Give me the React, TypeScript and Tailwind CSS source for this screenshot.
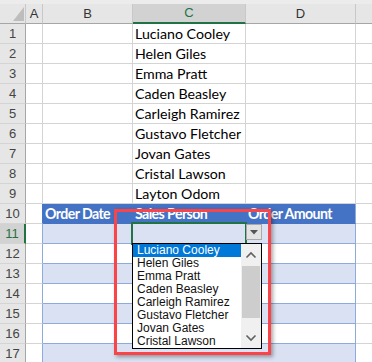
import React from 'react';

const names = [
  'Luciano Cooley',
  'Helen Giles',
  'Emma Pratt',
  'Caden Beasley',
  'Carleigh Ramirez',
  'Gustavo Fletcher',
  'Jovan Gates',
  'Cristal Lawson',
  'Layton Odom',
];

type Kind = 'plain' | 'head' | 'band' | 'white';

const RowHeader: React.FC<{ n: number; selected?: boolean }> = ({ n, selected }) => (
  <div
    className={
      'w-[26px] h-full flex items-center justify-center border-b border-b-[#d4d4d4] text-[13px] font-["Liberation_Sans",sans-serif] ' +
      (selected
        ? 'bg-[#d2d2d2] border-r-2 border-r-[#217346] text-[#217346]'
        : 'bg-[#e6e6e6] border-r border-r-[#a6a6a6] text-[#444]')
    }
  >
    {n}
  </div>
);

const Row: React.FC<{ n: number; b?: string; c?: string; d?: string; kind?: Kind; selected?: boolean }> = ({
  n,
  b = '',
  c = '',
  d = '',
  kind = 'plain',
  selected,
}) => {
  let tableCell = 'border-r border-b border-[#d4d4d4] bg-white';
  let lastCell = 'border-r border-b border-[#d4d4d4] bg-white';
  let aBorder = 'border-r-[#d4d4d4]';
  let text = 'text-black';
  if (kind === 'head') {
    tableCell = 'border-r border-b border-[#4472c4] bg-[#4472c4]';
    lastCell = 'border-r border-b border-b-[#4472c4] border-r-[#8ea9db] bg-[#4472c4]';
    aBorder = 'border-r-[#4472c4]';
    text = 'text-white font-bold tracking-[-0.6px]';
  } else if (kind === 'band') {
    tableCell = 'border-r border-b border-r-[#d9e1f2] border-b-[#8ea9db] bg-[#d9e1f2]';
    lastCell = 'border-r border-b border-[#8ea9db] bg-[#d9e1f2]';
    aBorder = 'border-r-[#8ea9db]';
  } else if (kind === 'white') {
    tableCell = 'border-r border-b border-r-[#d4d4d4] border-b-[#8ea9db] bg-white';
    lastCell = 'border-r border-b border-[#8ea9db] bg-white';
    aBorder = 'border-r-[#8ea9db]';
  }
  return (
    <div className="flex h-[20px] font-['Lato',sans-serif] text-[14.2px] leading-[19px]">
      <RowHeader n={n} selected={selected} />
      <div className={'w-[17px] border-r border-b border-b-[#d4d4d4] ' + aBorder} />
      <div className={'w-[90px] pl-[2px] whitespace-nowrap ' + tableCell + ' ' + text}>{b}</div>
      <div className={'w-[113px] pl-[2px] whitespace-nowrap ' + tableCell + ' ' + text}>{c}</div>
      <div className={'w-[110px] pl-[2px] whitespace-nowrap ' + lastCell + ' ' + text}>{d}</div>
      <div className="flex-1 border-b border-[#d4d4d4]" />
    </div>
  );
};

const ColHeader: React.FC<{ w: string; label: string; selected?: boolean }> = ({ w, label, selected }) => (
  <div
    className={
      w +
      ' flex items-center justify-center text-[13px] font-["Liberation_Sans",sans-serif] border-r border-r-[#c8c8c8] ' +
      (selected
        ? 'bg-[#d2d2d2] border-b-2 border-b-[#217346] text-[#217346]'
        : 'bg-[#e6e6e6] border-b border-b-[#a6a6a6] text-[#333]')
    }
  >
    {label}
  </div>
);

const Chevron: React.FC<{ up?: boolean }> = ({ up }) => (
  <svg width="12" height="8" viewBox="0 0 12 8">
    <path
      d={up ? 'M1.5 6.5 L6 2 L10.5 6.5' : 'M1.5 1.5 L6 6 L10.5 1.5'}
      fill="none"
      stroke="#606060"
      strokeWidth="1.6"
    />
  </svg>
);

export default function App() {
  const body: Kind[] = ['band', 'white', 'band', 'white', 'band', 'white', 'band'];
  return (
    <div className="relative w-[372px] h-[362px] overflow-hidden bg-white">
      {/* column headers */}
      <div className="h-[4px] bg-[#ececec]" />
      <div className="flex h-[20px]">
        <div className="relative w-[26px] bg-[#e6e6e6] border-r border-b border-r-[#c8c8c8] border-b-[#a6a6a6]">
          <svg className="absolute left-[13px] top-[3px]" width="11" height="14" viewBox="0 0 11 14">
            <polygon points="11,0 11,14 0,14" fill="#bdbdbd" />
          </svg>
        </div>
        <ColHeader w="w-[17px]" label="A" />
        <ColHeader w="w-[90px]" label="B" />
        <ColHeader w="w-[113px]" label="C" selected />
        <ColHeader w="w-[110px]" label="D" />
        <div className="flex-1 bg-[#e6e6e6] border-b border-b-[#a6a6a6]" />
      </div>

      {names.map((name, i) => (
        <Row key={name} n={i + 1} c={name} />
      ))}
      <Row n={10} kind="head" b="Order Date" c="Sales Person" d="Order Amount" />
      {body.map((k, i) => (
        <Row key={i} n={11 + i} kind={k} selected={i === 0} />
      ))}

      {/* active cell */}
      <div className="absolute left-[131px] top-[222px] w-[116px] h-[23px] border-2 border-[#217346]" />

      {/* dropdown button */}
      <div className="absolute left-[246px] top-[224px] w-[16px] h-[16px] bg-[#e3e3e3] border border-[#a9a9a9] flex items-center justify-center">
        <svg width="8" height="5" viewBox="0 0 8 5">
          <polygon points="0,0 8,0 4,4.5" fill="#555" />
        </svg>
      </div>

      {/* dropdown list */}
      <div className="absolute left-[132px] top-[243px] w-[130px] h-[106px] border border-black bg-white flex font-['Liberation_Sans',sans-serif] text-[12px]">
        <div className="flex-1 flex flex-col">
          {names.slice(0, 8).map((name, i) => (
            <div
              key={name}
              className={
                'h-[13px] leading-[13px] pl-[4px] whitespace-nowrap ' +
                (i === 0 ? 'bg-[#0078d7] text-white' : 'text-[#111]')
              }
            >
              {name}
            </div>
          ))}
        </div>
        <div className="w-[20px] bg-[#f0f0f0] flex flex-col items-center">
          <div className="h-[22px] flex items-center justify-center">
            <Chevron up />
          </div>
          <div className="w-[18px] h-[52px] bg-[#cdcdcd]" />
          <div className="flex-1" />
          <div className="h-[20px] flex items-center justify-center">
            <Chevron />
          </div>
        </div>
      </div>

      {/* highlight box */}
      <div className="absolute left-[114px] top-[209px] w-[157px] h-[146px] border-[3px] border-[#fa4448] shadow-[2px_2px_4px_rgba(0,0,0,0.35)]" />
    </div>
  );
}
